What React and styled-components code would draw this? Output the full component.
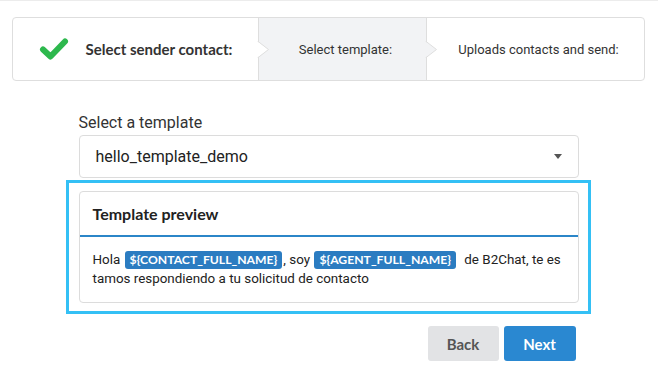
import React from 'react'
import styled, { createGlobalStyle } from 'styled-components'

const GlobalStyle = createGlobalStyle`
    body {
        margin: 0;
        background: #fff;
        font-family: Roboto, "Liberation Sans", sans-serif;
        color: #333;
    }
`

const Page = styled.div`
    border-top: 1px solid #ececec;
    padding: 16px 13px 12px 12px;
`

const Stepper = styled.div`
    display: flex;
    height: 62px;
    border: 1px solid #dedede;
    border-radius: 4px;
`

const Step = styled.div`
    position: relative;
    display: flex;
    align-items: center;
    justify-content: center;
    gap: 17px;
    width: ${p => p.width ? `${p.width}px` : 'auto'};
    flex: ${p => p.width ? 'none' : '1'};
    padding-left: ${p => p.first ? '0' : '6px'};
    background: ${p => p.active ? '#f2f3f5' : 'transparent'};
    border-right: ${p => p.last ? 'none' : '1px solid #dedede'};
    font-family: ${p => p.done ? 'Lato, sans-serif' : 'Roboto, sans-serif'};
    font-weight: ${p => p.done ? 700 : 400};
    font-size: ${p => p.done ? '15px' : '13px'};
    color: #333;
`

const Arrow = styled.svg`
    position: absolute;
    right: -12px;
    top: 50%;
    margin-top: -8px;
    z-index: 1;
`

const Content = styled.div`
    width: 500px;
    margin: 32px auto 0;
`

const Label = styled.div`
    font-size: 16px;
    line-height: 20px;
    margin-bottom: 2px;
    color: #333;
`

const Select = styled.div`
    display: flex;
    align-items: center;
    justify-content: space-between;
    height: 41px;
    padding: 0 16px;
    border: 1px solid #dcdcdc;
    border-radius: 4px;
    font-size: 16px;
    color: #222;
`

const Caret = styled.span`
    width: 0;
    height: 0;
    border-left: 4.5px solid transparent;
    border-right: 4.5px solid transparent;
    border-top: 5px solid #555;
`

const Highlight = styled.div`
    margin: 2px -12px 0 -13px;
    padding: 8px 9px 8px 10px;
    border: 3px solid #34c0f5;
`

const Card = styled.div`
    border: 1px solid #dcdcdc;
    border-radius: 4px;
`

const CardHeader = styled.div`
    display: flex;
    align-items: center;
    height: 43px;
    padding: 0 13px;
    border-bottom: 2px solid #2b86c8;
    font-family: Lato, sans-serif;
    font-weight: 700;
    font-size: 16px;
    color: #222;
`

const CardBody = styled.div`
    padding: 13px 13px 14px;
    font-size: 13.4px;
    line-height: 19px;
    color: #222;
`

const Line = styled.div`
    white-space: nowrap;
`

const Tag = styled.span`
    display: inline-block;
    padding: 0 5px;
    margin: 0 ${p => p.spaced ? '5px' : '1px'} 0 1px;
    line-height: 18px;
    border-radius: 3px;
    background: #2b7cc1;
    color: #fff;
    font-family: Lato, sans-serif;
    font-weight: 700;
    font-size: 12.2px;
`

const Actions = styled.div`
    display: flex;
    justify-content: flex-end;
    gap: 5px;
    margin: 12px 3px 0 0;
`

const Button = styled.button`
    width: ${p => p.w}px;
    height: 35px;
    border: none;
    border-radius: 3px;
    background: ${p => p.primary ? '#2a88d1' : '#e2e3e5'};
    color: ${p => p.primary ? '#fff' : '#555'};
    font-family: Lato, sans-serif;
    font-weight: 700;
    font-size: 15px;
`

const Chevron = ({ fill }) => (
    <Arrow width="13" height="17" viewBox="0 0 13 17">
        <polygon points="0,0 11.5,8.5 0,17" fill={fill} />
        <polyline points="0.5,0 11.5,8.5 0.5,17" fill="none" stroke="#dedede" strokeWidth="1" />
    </Arrow>
)

const CheckIcon = () => (
    <svg width="30" height="24" viewBox="0 0 30 24">
        <path d="M4 12.5 L11.5 19.5 L26 4.5" fill="none" stroke="#2db84d" strokeWidth="6" strokeLinecap="round" strokeLinejoin="round" />
    </svg>
)

const App = () => {
    return (
        <Page>
            <GlobalStyle />
            <Stepper>
                <Step width={245} first done>
                    <CheckIcon />
                    <span>Select sender contact:</span>
                    <Chevron fill="#fff" />
                </Step>
                <Step width={161} active>
                    <span>Select template:</span>
                    <Chevron fill="#f2f3f5" />
                </Step>
                <Step last>
                    <span>Uploads contacts and send:</span>
                </Step>
            </Stepper>
            <Content>
                <Label>Select a template</Label>
                <Select>
                    <span>hello_template_demo</span>
                    <Caret />
                </Select>
                <Highlight>
                    <Card>
                        <CardHeader>Template preview</CardHeader>
                        <CardBody>
                            <Line>
                                Hola <Tag>{'${CONTACT_FULL_NAME}'}</Tag>, soy <Tag spaced>{'${AGENT_FULL_NAME}'}</Tag> de B2Chat, te es
                            </Line>
                            <Line>tamos respondiendo a tu solicitud de contacto</Line>
                        </CardBody>
                    </Card>
                </Highlight>
                <Actions>
                    <Button w={71}>Back</Button>
                    <Button w={72} primary>Next</Button>
                </Actions>
            </Content>
        </Page>
    )
}

export default App
